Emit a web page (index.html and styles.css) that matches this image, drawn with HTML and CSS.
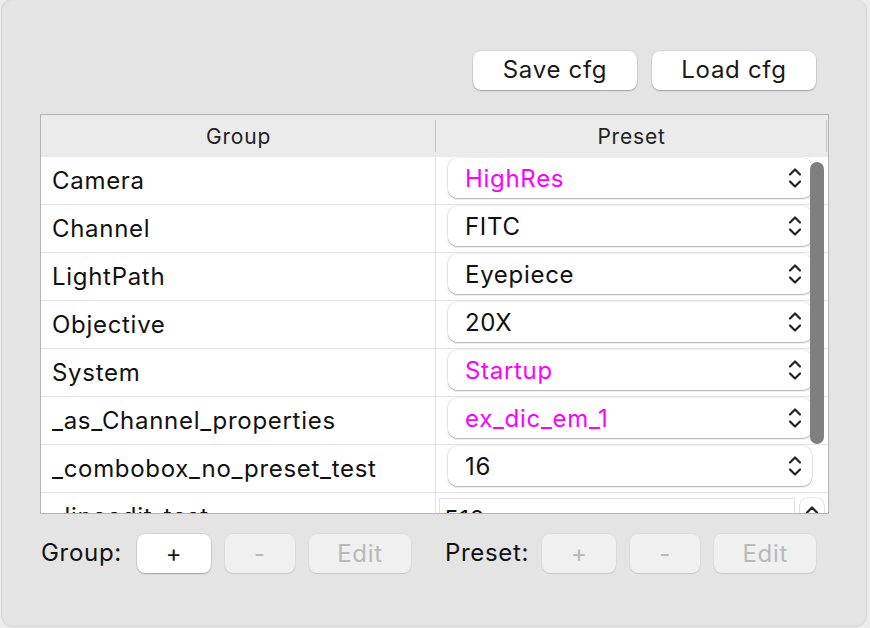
FILE: index.html
```html
<!DOCTYPE html>
<html>
<head>
<meta charset="utf-8">
<link rel="stylesheet" href="styles.css">
</head>
<body>
<div class="panel">
  <div class="topbar">
    <button class="btn btn-top">Save cfg</button>
    <button class="btn btn-top">Load cfg</button>
  </div>
  <div class="table">
    <div class="thead">
      <div class="th th-group">Group</div>
      <div class="th th-preset">Preset</div>
      <div class="th-rest"></div>
    </div>
    <div class="tbody">
      <div class="row"><div class="cell-group">Camera</div><div class="cell-preset"><div class="combo magenta"><span>HighRes</span><svg class="chev" viewBox="0 0 14 22"><path d="M2 7.5L7 2.5L12 7.5M2 14.5L7 19.5L12 14.5"/></svg></div></div></div>
      <div class="row"><div class="cell-group">Channel</div><div class="cell-preset"><div class="combo"><span>FITC</span><svg class="chev" viewBox="0 0 14 22"><path d="M2 7.5L7 2.5L12 7.5M2 14.5L7 19.5L12 14.5"/></svg></div></div></div>
      <div class="row"><div class="cell-group">LightPath</div><div class="cell-preset"><div class="combo"><span>Eyepiece</span><svg class="chev" viewBox="0 0 14 22"><path d="M2 7.5L7 2.5L12 7.5M2 14.5L7 19.5L12 14.5"/></svg></div></div></div>
      <div class="row"><div class="cell-group">Objective</div><div class="cell-preset"><div class="combo"><span>20X</span><svg class="chev" viewBox="0 0 14 22"><path d="M2 7.5L7 2.5L12 7.5M2 14.5L7 19.5L12 14.5"/></svg></div></div></div>
      <div class="row"><div class="cell-group">System</div><div class="cell-preset"><div class="combo magenta"><span>Startup</span><svg class="chev" viewBox="0 0 14 22"><path d="M2 7.5L7 2.5L12 7.5M2 14.5L7 19.5L12 14.5"/></svg></div></div></div>
      <div class="row"><div class="cell-group">_as_Channel_properties</div><div class="cell-preset"><div class="combo magenta"><span>ex_dic_em_1</span><svg class="chev" viewBox="0 0 14 22"><path d="M2 7.5L7 2.5L12 7.5M2 14.5L7 19.5L12 14.5"/></svg></div></div></div>
      <div class="row"><div class="cell-group">_combobox_no_preset_test</div><div class="cell-preset"><div class="combo"><span>16</span><svg class="chev" viewBox="0 0 14 22"><path d="M2 7.5L7 2.5L12 7.5M2 14.5L7 19.5L12 14.5"/></svg></div></div></div>
      <div class="row"><div class="cell-group">_lineedit_test</div><div class="cell-preset cell-edit"><div class="lineedit">512</div><div class="spin"><svg class="chev-up" viewBox="0 0 14 10"><path d="M2 7.5L7 2.5L12 7.5"/></svg></div></div></div>
    </div>
    <div class="scrollbar"></div>
  </div>
  <div class="bottombar">
    <span class="label">Group:</span>
    <button class="btn btn-small">+</button>
    <button class="btn btn-small btn-dis btn-minus">-</button>
    <button class="btn btn-edit btn-dis">Edit</button>
    <span class="label label-preset">Preset:</span>
    <button class="btn btn-small btn-dis">+</button>
    <button class="btn btn-small btn-dis btn-minus">-</button>
    <button class="btn btn-edit btn-dis">Edit</button>
  </div>
</div>
</body>
</html>
```

FILE: styles.css
```css
* { box-sizing: border-box; }
html, body { margin: 0; padding: 0; }
body {
  width: 870px;
  height: 628px;
  background: #ececec;
  font-family: Inter, "Noto Sans", "Liberation Sans", sans-serif;
  font-size: 24px;
  letter-spacing: 0.7px;
  color: #111;
  overflow: hidden;
}
.panel {
  margin: -1px 3px 0 1px;
  height: 628px;
  background: #e4e4e4;
  border: 1px solid #d6d6d6;
  border-radius: 11px;
  display: flex;
  flex-direction: column;
}
.topbar {
  display: flex;
  justify-content: flex-end;
  gap: 15px;
  padding: 51px 50px 0 0;
}
.btn {
  font-family: inherit;
  font-size: 24px;
  letter-spacing: 0.7px;
  color: #1a1a1a;
  background: #fff;
  border: none;
  border-radius: 8px;
  box-shadow: 0 0 0 0.5px rgba(0,0,0,0.12), 0 1px 1.5px rgba(0,0,0,0.25);
  height: 39px;
  padding: 0;
  display: flex;
  align-items: center;
  justify-content: center;
}
.btn-top { width: 164px; padding-bottom: 2px; }
.table {
  position: relative;
  margin: 24px 37px 0 38px;
  height: 400px;
  border: 1px solid #b4b4b4;
  background: #fff;
  overflow: hidden;
}
.thead {
  display: flex;
  height: 42px;
  background: #ebebeb;
  font-size: 21px;
  letter-spacing: 0.8px;
  color: #222;
}
.th {
  display: flex;
  align-items: center;
  justify-content: center;
  position: relative;
}
.th-group { width: 395px; }
.th-preset { width: 391px; }
.th::after {
  content: "";
  position: absolute;
  right: 0;
  top: 5px;
  bottom: 5px;
  width: 1.5px;
  background: #c4c4c4;
}
.th-rest { flex: 1; }
.row {
  display: flex;
  height: 48px;
  border-bottom: 1px solid #e3e3e3;
}
.cell-group {
  width: 395px;
  border-right: 1px solid #e3e3e3;
  padding-left: 11px;
  display: flex;
  align-items: center;
  padding-bottom: 1px;
  white-space: nowrap;
}
.cell-preset {
  flex: 1;
  padding: 1px 16px 0 12px;
}
.combo {
  height: 40px;
  background: #fff;
  border-radius: 9px;
  box-shadow: 0 0 0 0.5px rgba(0,0,0,0.12), 0 1px 1.5px rgba(0,0,0,0.28);
  display: flex;
  align-items: center;
  justify-content: space-between;
  padding: 0 10px 0 17px;
}
.combo span { padding-top: 1px; }
.magenta { color: #ff00ff; }
.chev {
  width: 14px;
  height: 22px;
  fill: none;
  stroke: #222;
  stroke-width: 2.2;
  stroke-linecap: round;
  stroke-linejoin: round;
}
.cell-edit {
  display: flex;
  padding: 5px 4px 0 3px;
  gap: 5px;
}
.lineedit {
  width: 356px;
  height: 40px;
  border: 1px solid #e0e0e0;
  padding: 6px 0 0 4px;
}
.spin {
  width: 24px;
  height: 24px;
  border-radius: 7px;
  background: #fff;
  box-shadow: 0 0 0 0.5px rgba(0,0,0,0.15), 0 1px 1.5px rgba(0,0,0,0.25);
  display: flex;
  justify-content: center;
  align-items: center;
}
.chev-up {
  width: 14px;
  height: 10px;
  fill: none;
  stroke: #222;
  stroke-width: 2.2;
  stroke-linecap: round;
  stroke-linejoin: round;
}
.scrollbar {
  position: absolute;
  left: 769px;
  top: 47px;
  width: 14px;
  height: 282px;
  border-radius: 7px;
  background: #7f7f7f;
}
.bottombar {
  display: flex;
  align-items: center;
  padding: 20px 0 0 39px;
}
.label { margin-right: 15px; padding-bottom: 2px; }
.label-preset { margin-left: 34px; margin-right: 13px; }
.btn-small { width: 74px; margin-right: 14px; }
.btn-minus { width: 70px; }
.btn-edit { width: 102px; }
.btn-dis {
  background: #f0f0f0;
  color: #b9b9b9;
  box-shadow: 0 0 0 0.5px rgba(0,0,0,0.06), 0 1px 1px rgba(0,0,0,0.1);
}
```
